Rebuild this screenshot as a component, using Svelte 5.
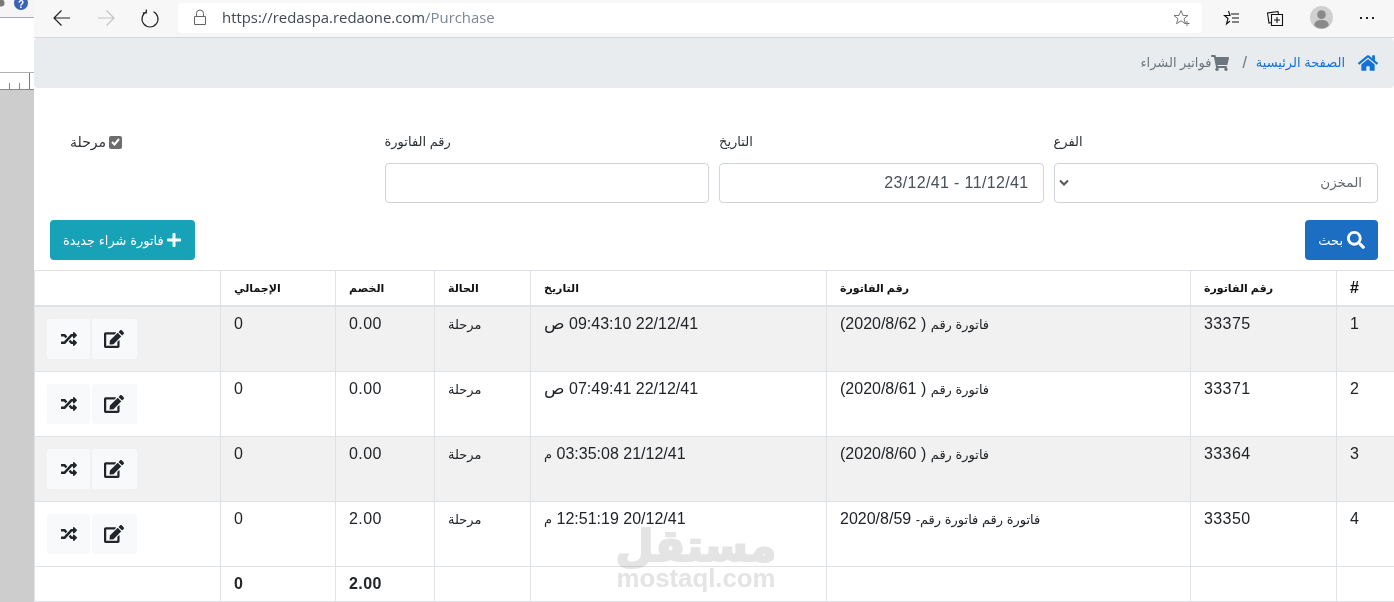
<script>
	const icons = {
		home: { w: 576, d: 'M280.37 148.26L96 300.11V464a16 16 0 0 0 16 16l112.06-.29a16 16 0 0 0 15.92-16V368a16 16 0 0 1 16-16h64a16 16 0 0 1 16 16v95.64a16 16 0 0 0 16 16.05L464 480a16 16 0 0 0 16-16V300L295.67 148.26a12.19 12.19 0 0 0-15.3 0zM571.6 251.47L488 182.56V44.05a12 12 0 0 0-12-12h-56a12 12 0 0 0-12 12v72.61L318.47 43a48 48 0 0 0-61 0L4.34 251.47a12 12 0 0 0-1.6 16.9l25.5 31A12 12 0 0 0 45.15 301l235.22-193.74a12.19 12.19 0 0 1 15.3 0L530.9 301a12 12 0 0 0 16.9-1.6l25.5-31a12 12 0 0 0-1.7-16.93z' },
		cart: { w: 576, d: 'M528.12 301.319l47.273-208C578.806 78.301 567.391 64 551.99 64H159.208l-9.166-44.81C147.758 8.021 137.93 0 126.529 0H24C10.745 0 0 10.745 0 24v16c0 13.255 10.745 24 24 24h69.883l70.248 343.435C147.325 417.1 136 435.222 136 456c0 30.928 25.072 56 56 56s56-25.072 56-56c0-15.674-6.447-29.835-16.824-40h209.647C430.447 426.165 424 440.326 424 456c0 30.928 25.072 56 56 56s56-25.072 56-56c0-22.172-12.888-41.332-31.579-50.405l5.517-24.276c3.413-15.018-8.002-29.319-23.403-29.319H218.117l-6.545-32h293.145c11.206 0 20.92-7.754 23.403-18.681z' },
		search: { w: 512, d: 'M505 442.7L405.3 343c-4.5-4.5-10.6-7-17-7H372c27.6-35.3 44-79.7 44-128C416 93.1 322.9 0 208 0S0 93.1 0 208s93.1 208 208 208c48.3 0 92.7-16.4 128-44v16.3c0 6.4 2.5 12.5 7 17l99.7 99.7c9.4 9.4 24.6 9.4 33.9 0l28.3-28.3c9.4-9.4 9.4-24.6.1-34zM208 336c-70.7 0-128-57.2-128-128 0-70.7 57.2-128 128-128 70.7 0 128 57.2 128 128 0 70.7-57.2 128-128 128z' },
		plus: { w: 448, d: 'M416 208H272V64c0-17.67-14.33-32-32-32h-32c-17.67 0-32 14.33-32 32v144H32c-17.67 0-32 14.33-32 32v32c0 17.67 14.33 32 32 32h144v144c0 17.67 14.33 32 32 32h32c17.67 0 32-14.33 32-32V304h144c17.67 0 32-14.33 32-32v-32c0-17.67-14.33-32-32-32z' },
		random: { w: 512, d: 'M504.971 359.029c9.373 9.373 9.373 24.569 0 33.941l-80 79.984c-15.01 15.01-40.971 4.49-40.971-16.971V416h-58.785a12.004 12.004 0 0 1-8.773-3.812l-70.556-75.596 53.333-57.143L352 336h32v-39.981c0-21.438 25.943-31.998 40.971-16.971l80 79.981zM12 176h84l52.781 56.551 53.333-57.143-70.556-75.596A11.999 11.999 0 0 0 122.785 96H12c-6.627 0-12 5.373-12 12v56c0 6.627 5.373 12 12 12zm372 0v39.984c0 21.46 25.961 31.98 40.971 16.971l80-79.984c9.373-9.373 9.373-24.569 0-33.941l-80-79.981C409.943 24.021 384 34.582 384 56.019V96h-58.785a12.004 12.004 0 0 0-8.773 3.812L96 336H12c-6.627 0-12 5.373-12 12v56c0 6.627 5.373 12 12 12h110.785c3.326 0 6.503-1.381 8.773-3.812L352 176h32z' },
		edit: { w: 576, d: 'M402.6 83.2l90.2 90.2c3.8 3.8 3.8 10 0 13.8L274.4 405.6l-92.8 10.3c-12.4 1.4-22.9-9.1-21.5-21.5l10.3-92.8L388.8 83.2c3.8-3.8 10-3.8 13.8 0zm162-22.9l-48.8-48.8c-15.2-15.2-39.9-15.2-55.2 0l-35.4 35.4c-3.8 3.8-3.8 10 0 13.8l90.2 90.2c3.8 3.8 10 3.8 13.8 0l35.4-35.4c15.2-15.3 15.2-40 0-55.2zM384 346.2V448H64V128h229.8c3.2 0 6.2-1.3 8.5-3.5l40-40c7.6-7.6 2.2-20.5-8.5-20.5H48C21.5 64 0 85.5 0 112v352c0 26.5 21.5 48 48 48h352c26.5 0 48-21.5 48-48V306.2c0-10.7-12.9-16-20.5-8.5l-40 40c-2.2 2.3-3.5 5.3-3.5 8.5z' }
	};

	const columns = ['#', 'رقم الفاتورة', 'رقم الفاتورة', 'التاريخ', 'الحالة', 'الخصم', 'الإجمالي', ''];

	const rows = [
		{ id: 1, num: '33375', title: 'فاتورة رقم', ref: '( 2020/8/62)', date: '22/12/41 09:43:10', ampm: 'ص', discount: '0.00' },
		{ id: 2, num: '33371', title: 'فاتورة رقم', ref: '( 2020/8/61)', date: '22/12/41 07:49:41', ampm: 'ص', discount: '0.00' },
		{ id: 3, num: '33364', title: 'فاتورة رقم', ref: '( 2020/8/60)', date: '21/12/41 03:35:08', ampm: 'م', discount: '0.00' },
		{ id: 4, num: '33350', title: 'فاتورة رقم فاتورة رقم-', ref: '2020/8/59', date: '20/12/41 12:51:19', ampm: 'م', discount: '2.00' }
	];
</script>

{#snippet fa(name, size)}
	<svg class="fa" width={size} height={size} viewBox="0 0 {icons[name].w} 512" fill="currentColor" aria-hidden="true">
		<path d={icons[name].d} />
	</svg>
{/snippet}

<div class="screen">
	<aside class="strip">
		<div class="strip-top">
			<svg width="34" height="17" viewBox="0 0 34 17">
				<circle cx="1" cy="3" r="3.5" fill="#777" />
				<circle cx="21" cy="3" r="7" fill="#3a63b5" />
				<text x="21" y="8" text-anchor="middle" class="help">?</text>
			</svg>
		</div>
		<div class="strip-doc"></div>
		<div class="strip-ruler">
			<span class="tick"></span>
			<span class="tick"></span>
			<span class="tick blue"></span>
		</div>
	</aside>

	<div class="main">
		<header class="browser">
			<button class="nav" aria-label="Back">
				<svg width="20" height="20" viewBox="0 0 20 20" fill="none" stroke="#222" stroke-width="1.2"><path d="M18 10H2M9.5 2.5 2 10l7.5 7.5" /></svg>
			</button>
			<button class="nav" aria-label="Forward">
				<svg width="20" height="20" viewBox="0 0 20 20" fill="none" stroke="#c4c4c4" stroke-width="1.2"><path d="M2 10h16M10.500 2.500 18 10l-7.500 7.500" /></svg>
			</button>
			<button class="nav last" aria-label="Refresh">
				<svg width="20" height="20" viewBox="0 0 20 20" fill="none" stroke="#222" stroke-width="1.200"><path d="M13.500 3.200a8 8 0 1 1-7 0M6.300 .8v3.400H2.900" transform="translate(0 .6)" /></svg>
			</button>
			<div class="address">
				<svg width="14" height="17" viewBox="0 0 14 17" fill="none" stroke="#666" stroke-width="1"><path d="M1.500 7.500h11v8h-11zM3.500 7.500V4.500a3.500 3.500 0 0 1 7 0v3" /></svg>
				<span class="url">https://redaspa.redaone.com<span class="path">/Purchase</span></span>
				<svg class="addr-star" width="18" height="18" viewBox="0 0 18 18" fill="none" stroke="#777" stroke-width="1"><path d="M8 1.500l2 5h5l-4 3.200 1.500 5L8 11.800l-4.500 2.900L5 9.700 1 6.500h5zM14 12v5M11.500 14.500h5" /></svg>
			</div>
			<div class="tools">
				<svg width="18" height="18" viewBox="0 0 18 18" fill="none" stroke="#111" stroke-width="1.100"><path d="M6.500 2 8 6.500h-5.500L6 9.500 4.500 15 8 12M9 5h8M10 9h7M10 13h7" /></svg>
				<svg width="18" height="18" viewBox="0 0 18 18" fill="none" stroke="#111" stroke-width="1.100"><path d="M5.500 5.500h11v11h-11zM11 8v6M8 11h6M5.500 13.500 3 14 1.500 4 12 2.500l.5 3" /></svg>
				<span class="avatar">
					<svg width="24" height="24" viewBox="0 0 24 24" fill="#8a8a8a"><circle cx="12" cy="8.500" r="4.500" /><path d="M4.500 20c0-4.500 3-6 7.500-6s7.500 1.500 7.500 6a11 11 0 0 1-15 0z" /></svg>
				</span>
				<span class="dots"><i></i><i></i><i></i></span>
			</div>
		</header>

		<nav class="breadcrumb" dir="rtl">
			<span class="crumb-link">{@render fa('home', 20)}<span>الصفحة الرئيسية</span></span>
			<span class="slash">/</span>
			<span class="crumb-current">{@render fa('cart', 18)}<span>فواتير الشراء</span></span>
		</nav>

		<section class="filters" dir="rtl">
			<div class="field">
				<span class="label">الفرع</span>
				<div class="select"><span>المخزن</span>
					<svg width="10" height="8" viewBox="0 0 10 8" fill="none" stroke="#555" stroke-width="2"><path d="M1 1.500l4 4 4-4" /></svg>
				</div>
			</div>
			<div class="field">
				<span class="label">التاريخ</span>
				<div class="input date">11/12/41 - 23/12/41</div>
			</div>
			<div class="field">
				<span class="label">رقم الفاتورة</span>
				<div class="input"></div>
			</div>
			<div class="field">
				<label class="check">
					<span class="box">
						<svg width="9" height="8" viewBox="0 0 9 8" fill="none" stroke="#fff" stroke-width="2"><path d="M1 4l2.500 2.500L8 1" /></svg>
					</span>
					<span class="check-text">مرحلة</span>
				</label>
			</div>
		</section>

		<div class="actions" dir="rtl">
			<button class="btn search">{@render fa('search', 18)}<span>بحث</span></button>
			<button class="btn add">{@render fa('plus', 16)}<span>فاتورة شراء جديدة</span></button>
		</div>

		<table dir="rtl">
			<colgroup>
				<col class="c1" /><col class="c2" /><col class="c3" /><col class="c4" />
				<col class="c5" /><col class="c6" /><col class="c7" /><col class="c8" />
			</colgroup>
			<thead>
				<tr>
					{#each columns as col}
						<th>{col}</th>
					{/each}
				</tr>
			</thead>
			<tbody>
				{#each rows as row}
					<tr>
						<td>{row.id}</td>
						<td>{row.num}</td>
						<td><span class="ar">{row.title}</span> {row.ref}</td>
						<td class="when">{row.date} <span class="ampm" class:wide={row.ampm === 'ص'}>{row.ampm}</span></td>
						<td><span class="ar">مرحلة</span></td>
						<td>{row.discount}</td>
						<td>0</td>
						<td class="btns">
							<div class="btn-group">
								<button class="icon-btn edit" aria-label="تعديل">{@render fa('edit', 20)}</button>
								<button class="icon-btn" aria-label="تحويل">{@render fa('random', 16)}</button>
							</div>
						</td>
					</tr>
				{/each}
				<tr class="total">
					<td></td><td></td><td></td><td></td><td></td>
					<td>2.00</td>
					<td>0</td>
					<td></td>
				</tr>
			</tbody>
		</table>

		<div class="watermark">
			<span class="wm-ar">مستقل</span>
			<span class="wm-en">mostaql.com</span>
		</div>
	</div>
</div>

<style>
	:global(body) {
		margin: 0;
		background: #fff;
		overflow: hidden;
	}

	.screen {
		display: flex;
		width: 1394px;
		height: 602px;
		overflow: hidden;
		font-family: 'Liberation Sans', 'DejaVu Sans', sans-serif;
		font-size: 16px;
		line-height: 1.5;
		color: #212529;
	}

	.strip {
		flex: 0 0 34px;
		display: flex;
		flex-direction: column;
		background: #cdcdcd;
	}

	.strip-top {
		height: 17px;
		background: #f5f5f5;
		border-bottom: 1px solid #aaa6b0;
		overflow: hidden;
	}

	.strip-top svg {
		display: block;
	}

	.help {
		font-size: 10px;
		font-weight: bold;
		fill: #fff;
	}

	.strip-doc {
		height: 54px;
		background: #fff;
		border-bottom: 1px solid #b3adbd;
	}

	.strip-ruler {
		height: 16px;
		background: #fff;
		border-bottom: 1px solid #8a8a8a;
		display: flex;
		align-items: flex-end;
		gap: 9px;
		padding-left: 9px;
	}

	.tick {
		width: 1px;
		height: 6px;
		background: #888;
	}

	.tick.blue {
		height: 16px;
		background: #2d8fd8;
	}

	.main {
		position: relative;
		flex: 1;
		min-width: 0;
		background: #fff;
		display: flex;
		flex-direction: column;
	}

	.browser {
		height: 38px;
		box-sizing: border-box;
		background: #f7f7f7;
		border-bottom: 1px solid #d6d6d6;
		display: flex;
		align-items: center;
		padding: 0 0 2px 18px;
		flex: none;
	}

	.nav {
		width: 44px;
		height: 30px;
		border: 0;
		background: none;
		padding: 0;
		display: flex;
		align-items: center;
	}

	.nav.last {
		width: 38px;
	}

	.nav svg {
		display: block;
	}

	.address {
		width: 1024px;
		height: 30px;
		box-sizing: border-box;
		background: #fff;
		border-radius: 4px;
		display: flex;
		align-items: center;
		padding: 0 11px 0 15px;
		gap: 15px;
	}

	.url {
		font-family: 'Open Sans', sans-serif;
		font-size: 14.9px;
		color: #3f4a54;
		white-space: nowrap;
	}

	.path {
		color: #7b8793;
	}

	.addr-star {
		margin-left: auto;
	}

	.tools {
		display: flex;
		align-items: center;
		margin-left: 20px;
		gap: 26px;
	}

	.avatar {
		width: 23px;
		height: 23px;
		border-radius: 50%;
		background: #d0d0d0;
		overflow: hidden;
		display: flex;
	}

	.dots {
		display: flex;
		gap: 4px;
		margin-left: 1px;
	}

	.dots i {
		width: 2px;
		height: 2px;
		background: #222;
	}

	.breadcrumb {
		flex: none;
		height: 50px;
		box-sizing: border-box;
		background: #e9ecef;
		border-radius: 4px;
		display: flex;
		align-items: center;
		padding: 0 16px;
		font-size: 13px;
	}

	.crumb-link {
		display: flex;
		align-items: center;
		gap: 13px;
		color: #1472d6;
	}

	.slash {
		color: #6c757d;
		font-size: 16px;
		margin: 0 9px 0 13px;
	}

	.crumb-current {
		display: flex;
		align-items: center;
		color: #6c757d;
	}

	.filters {
		flex: none;
		display: grid;
		grid-template-columns: repeat(4, 1fr);
		gap: 10px;
		padding: 42px 16px 0;
		box-sizing: border-box;
	}

	.field {
		display: flex;
		flex-direction: column;
		gap: 9px;
	}

	.label {
		font-size: 13px;
		line-height: 24px;
		text-align: left;
		color: #2c3136;
	}

	.select,
	.input {
		height: 40px;
		box-sizing: border-box;
		border: 1px solid #ced4da;
		border-radius: 4px;
		display: flex;
		align-items: center;
		padding: 0 14px;
		color: #495057;
		letter-spacing: 0.35px;
	}

	.select {
		justify-content: space-between;
		font-size: 13.5px;
		padding: 0 15px 0 4px;
		color: #60676d;
		letter-spacing: 0;
	}

	.date {
		justify-content: flex-start;
	}

	.check {
		display: flex;
		align-items: center;
		justify-content: flex-end;
		gap: 3px;
		padding-left: 20px;
		height: 24px;
	}

	.check-text {
		font-size: 14px;
		color: #2c3136;
	}

	.box {
		width: 13px;
		height: 13px;
		border-radius: 2px;
		background: #6d6d6d;
		display: flex;
		align-items: center;
		justify-content: center;
	}

	.actions {
		flex: none;
		display: flex;
		justify-content: space-between;
		padding: 17px 16px 10px;
	}

	.btn {
		height: 40px;
		border: 0;
		border-radius: 4px;
		color: #fff;
		display: flex;
		align-items: center;
		font-family: inherit;
		font-size: 13px;
		padding: 0 13px;
	}

	.btn.search {
		background: #1b6ec2;
		gap: 4px;
	}

	.btn.add {
		background: #17a2b8;
		gap: 2px;
	}

	table {
		flex: none;
		width: 1360px;
		table-layout: fixed;
		border-collapse: collapse;
		text-align: left;
	}

	.c1 { width: 58px; }
	.c2 { width: 146px; }
	.c3 { width: 364px; }
	.c4 { width: 296px; }
	.c5 { width: 96px; }
	.c6 { width: 99px; }
	.c7 { width: 115px; }
	.c8 { width: 186px; }

	th,
	td {
		border: 1px solid #dee2e6;
		padding: 5px 13px 0;
		vertical-align: top;
		text-align: left;
	}

	th {
		height: 35px;
		box-sizing: border-box;
		border-bottom-width: 2px;
		font-size: 11px;
		line-height: 24px;
		font-weight: bold;
		color: #111;
	}

	th:first-child {
		font-size: 16px;
	}

	td {
		height: 64px;
		box-sizing: border-box;
		letter-spacing: 0.4px;
	}

	td.when {
		letter-spacing: 0.8px;
	}

	tbody tr:nth-child(odd):not(.total) {
		background: #f1f1f1;
	}

	tbody tr:nth-child(5) td {
		height: 35px;
		font-weight: bold;
	}

	.ar,
	.ampm {
		font-size: 13px;
		letter-spacing: 0;
	}

	.ampm.wide {
		font-size: 17px;
		line-height: 1;
	}

	td.btns {
		padding: 12px;
	}

	.btn-group {
		display: flex;
		gap: 2px;
		justify-content: flex-end;
		direction: rtl;
	}

	.icon-btn {
		width: 43px;
		height: 40px;
		border: 0;
		padding: 0;
		border-radius: 3px;
		background: #f8f9fa;
		color: #212529;
		display: flex;
		align-items: center;
		justify-content: center;
	}

	.icon-btn.edit {
		width: 45px;
		padding-right: 2px;
	}

	.watermark {
		position: absolute;
		left: 583px;
		top: 526px;
		width: 158px;
		display: flex;
		flex-direction: column;
		align-items: center;
		pointer-events: none;
		color: #e4e4e4;
		mix-blend-mode: multiply;
		font-weight: bold;
	}

	.wm-ar {
		font-size: 44px;
		line-height: 39px;
		direction: rtl;
		-webkit-text-stroke: 2px #e4e4e4;
	}

	.wm-en {
		font-size: 25.8px;
		line-height: 26px;
	}
</style>
